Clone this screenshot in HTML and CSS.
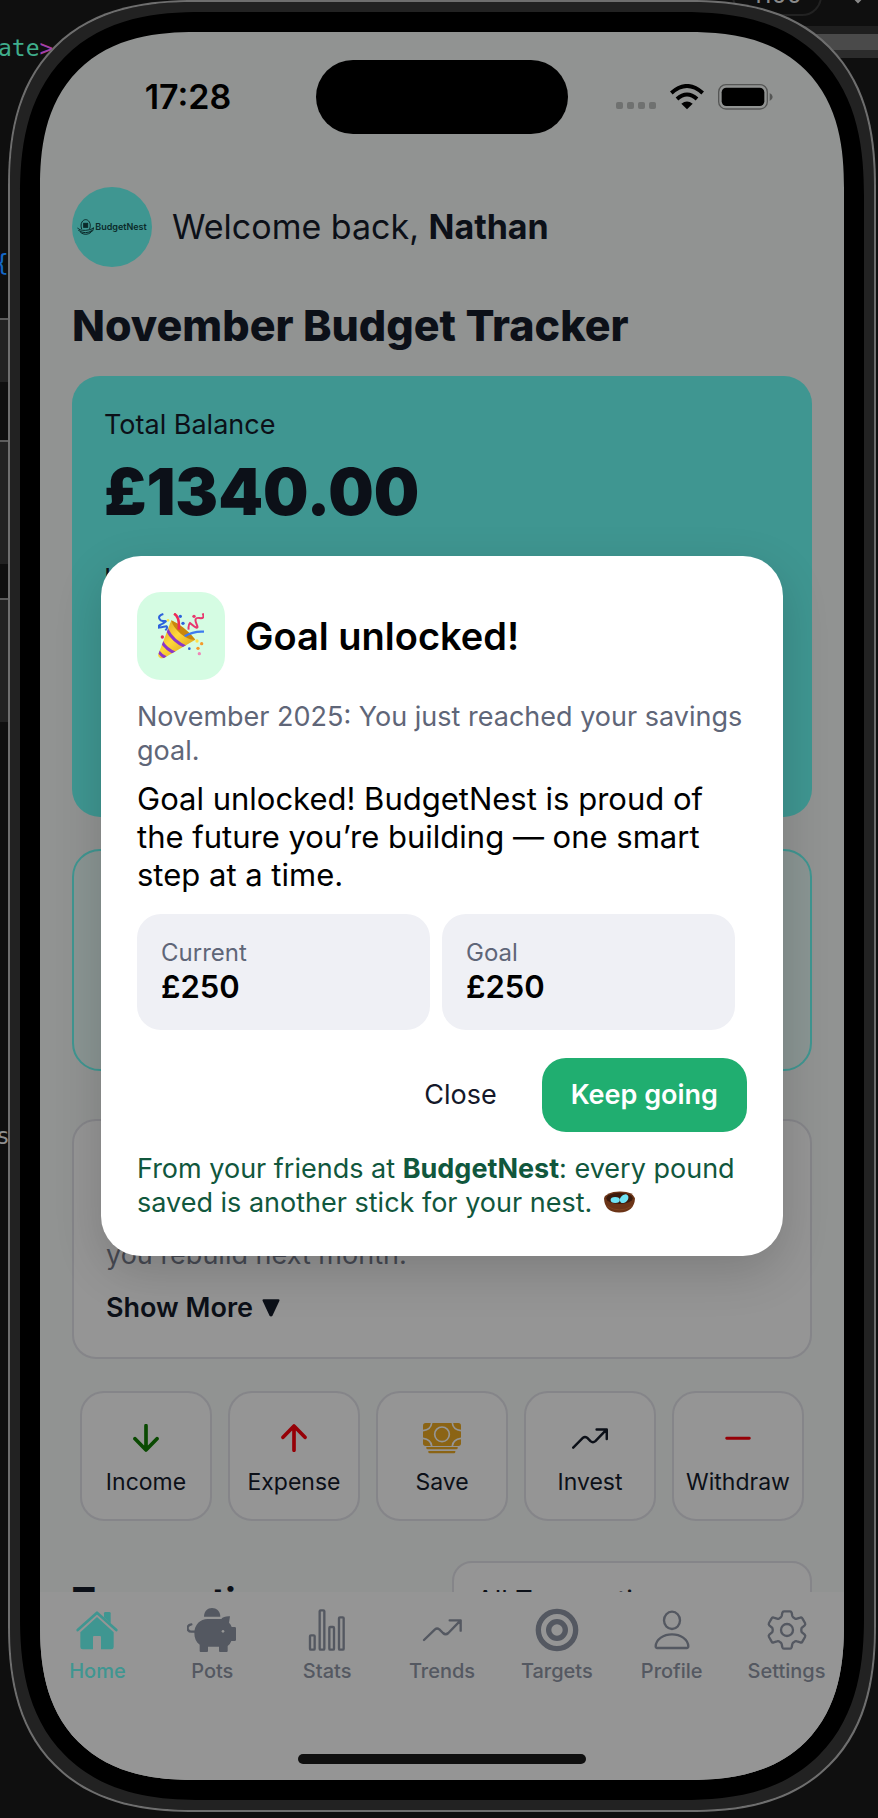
FILE: index.html
```html
<!DOCTYPE html>
<html lang="en">
<head>
    <meta charset="UTF-8">
    <meta name="viewport" content="width=device-width, initial-scale=1.0">
    <title>BudgetNest</title>
    <link rel="stylesheet" href="styles.css">
</head>
<body>

    <!-- editor window behind the phone -->
    <div class="desktop">
        <span class="code code-type">ate<span class="code-bracket">&gt;</span></span>
        <span class="code code-brace">{</span>
        <span class="code code-word">s</span>
        <div class="panel panel-1"></div>
        <div class="panel panel-2"></div>
        <div class="panel panel-3"></div>
        <div class="zoom-pill">1100</div>
        <svg class="zoom-arrow" width="12" height="8" viewBox="0 0 12 8"><path d="M1 1l5 5 5-5" fill="none" stroke="#8a8a8a" stroke-width="2"/></svg>
        <div class="toolbar"></div>
    </div>

    <div class="phone">
        <div class="bezel">
            <div class="screen">

                <div class="status-bar">
                    <div class="time">17:28</div>
                    <div class="island"></div>
                    <div class="indicators">
                        <svg width="40" height="26" viewBox="0 0 40 26" fill="#6f7170">
                            <rect x="0" y="18" width="7" height="7" rx="2"/>
                            <rect x="11" y="18" width="7" height="7" rx="2"/>
                            <rect x="22" y="18" width="7" height="7" rx="2"/>
                            <rect x="33" y="18" width="7" height="7" rx="2"/>
                        </svg>
                        <svg width="34" height="26" viewBox="0 0 102 78" fill="none" stroke="#000" stroke-width="12">
                            <path d="M4 27Q51-15 98 27"/>
                            <path d="M21 45Q51 18 81 45"/>
                            <path d="M51 76L34 59Q51 46 68 59Z" fill="#000" stroke="none"/>
                        </svg>
                        <svg width="55" height="26" viewBox="0 0 165 78">
                            <rect x="2" y="2" width="146" height="73" rx="22" fill="none" stroke="#555655" stroke-width="4"/>
                            <rect x="11" y="11" width="128" height="55" rx="14" fill="#000"/>
                            <path d="M155 27q9 4 9 12t-9 12z" fill="#555655"/>
                        </svg>
                    </div>
                </div>

                <main class="content">
                    <header class="welcome">
                        <div class="avatar">
                            <svg width="17" height="16" viewBox="0 0 51 48" fill="none" stroke="#0b2a2a" stroke-width="3">
                                <path d="M14 30C8 12 18 2 26 2s18 10 12 28"/>
                                <rect x="20" y="13" width="12" height="12" fill="#0b2a2a"/>
                                <path d="M1 26q6 9 25 8t24-8q0 12-12 15"/>
                                <path d="M4 34q22 14 42 0M10 40q16 12 32 0"/>
                            </svg>
                            <span>BudgetNest</span>
                        </div>
                        <p>Welcome back, <strong>Nathan</strong></p>
                    </header>

                    <h1>November Budget Tracker</h1>

                    <section class="balance">
                        <p class="balance-label">Total Balance</p>
                        <p class="balance-amount">£1340.00</p>
                        <p class="balance-label">Income</p>
                    </section>

                    <section class="accent-card"></section>

                    <section class="tip-card">
                        <p>you rebuild next month.</p>
                        <button type="button" class="show-more">Show More
                            <svg width="18" height="18" viewBox="0 0 54 54"><path d="M5 1H49Q54 1 52 6L32 49Q27 56 22 49L2 6Q0 1 5 1Z" fill="#0c1018"/></svg>
                        </button>
                    </section>

                    <div class="actions">
                        <button type="button" class="action">
                            <svg width="26" height="28" viewBox="0 0 78 84" fill="none" stroke="#0a4a02" stroke-width="11" stroke-linecap="round" stroke-linejoin="round"><path d="M39 5V78M6 44L39 78L72 44"/></svg>
                            Income
                        </button>
                        <button type="button" class="action">
                            <svg width="26" height="28" viewBox="0 0 78 84" fill="none" stroke="#960007" stroke-width="11" stroke-linecap="round" stroke-linejoin="round"><path d="M39 79V6M6 40L39 6L72 40"/></svg>
                            Expense
                        </button>
                        <button type="button" class="action">
                            <svg width="38" height="31" viewBox="0 0 114 93">
                                <rect width="114" height="69" rx="8" fill="#8b6415"/>
                                <g fill="none" stroke="#959595" stroke-width="5">
                                    <circle cx="57" cy="34" r="22"/>
                                    <path d="M26 0Q24 20 0 23M88 0Q90 20 114 23M0 46Q24 49 26 69M114 46Q90 49 88 69"/>
                                </g>
                                <path d="M10 72H104V75Q104 79 100 79H14Q10 79 10 75ZM16 84H97V87Q97 91 93 91H20Q16 91 16 87Z" fill="#8b6415"/>
                            </svg>
                            Save
                        </button>
                        <button type="button" class="action">
                            <svg width="36" height="21" viewBox="18 33 117 67" fill="none" stroke="#0c1018" stroke-width="8" stroke-linecap="round" stroke-linejoin="round"><path d="M22 96L54 64Q60 59 67 64L78 75Q86 82 94 75L130 38M98 37H131V68"/></svg>
                            Invest
                        </button>
                        <button type="button" class="action">
                            <svg width="26" height="4" viewBox="0 0 78 12"><rect x="1" y="2" width="76" height="9" rx="4" fill="#960007"/></svg>
                            Withdraw
                        </button>
                    </div>

                    <div class="transactions">
                        <h2>Transactions</h2>
                        <select aria-label="Filter transactions">
                            <option>All Transactions</option>
                        </select>
                    </div>
                </main>

                <nav class="tabs">
                    <a href="#" class="tab active">
                        <svg width="50" height="44" viewBox="0 0 150 132" fill="currentColor">
                            <path d="M17 66L75 14L133 66" fill="none" stroke="currentColor" stroke-width="8" stroke-linecap="round" stroke-linejoin="round"/>
                            <path d="M96 28V16Q96 12 100 12H112Q116 12 116 16V46Z"/>
                            <path d="M75 27L125 73V117Q125 124 118 124H87V87Q87 84 84 84H66Q63 84 63 87V124H32Q25 124 25 117V73Z"/>
                        </svg>
                        Home
                    </a>
                    <a href="#" class="tab">
                        <svg width="50" height="44" viewBox="0 0 150 132" fill="currentColor">
                            <path d="M51 26C51 10 62 0 75 0S100 10 100 26Z"/>
                            <path d="M62 33H103C107 27 118 24 129 25L126 44Q132 49 134 57H143Q147 57 147 61V95Q147 99 143 99H133Q130 108 122 114V129Q122 132 119 132H99Q96 132 96 129V116H63V129Q63 132 60 132H41Q38 132 38 129V110C27 102 22 90 22 75C22 50 40 33 62 33Z"/>
                            <path d="M24 71H13C4 71 1 64 2 58Q4 50 13 49" fill="none" stroke="currentColor" stroke-width="7" stroke-linecap="round"/>
                            <circle cx="108" cy="70" r="4" fill="#959595"/>
                        </svg>
                        Pots
                    </a>
                    <a href="#" class="tab">
                        <svg width="50" height="44" viewBox="0 0 150 132" fill="none" stroke="currentColor" stroke-width="7">
                            <rect x="24" y="82" width="14" height="43" rx="3"/>
                            <rect x="53" y="7" width="14" height="118" rx="3"/>
                            <rect x="82" y="57" width="14" height="68" rx="3"/>
                            <rect x="111" y="28" width="14" height="97" rx="3"/>
                        </svg>
                        Stats
                    </a>
                    <a href="#" class="tab">
                        <svg width="50" height="44" viewBox="0 0 150 132" fill="none" stroke="currentColor" stroke-width="7" stroke-linecap="round" stroke-linejoin="round"><path d="M21 96L54 64Q60 59 67 64L78 75Q86 82 94 75L130 38M98 37H131V68"/></svg>
                        Trends
                    </a>
                    <a href="#" class="tab">
                        <svg width="50" height="44" viewBox="0 0 150 132" fill="none" stroke="currentColor" stroke-width="16">
                            <circle cx="75" cy="66" r="56"/>
                            <circle cx="75" cy="66" r="25"/>
                        </svg>
                        Targets
                    </a>
                    <a href="#" class="tab">
                        <svg width="50" height="44" viewBox="0 0 150 132" fill="none" stroke="currentColor" stroke-width="7">
                            <ellipse cx="75" cy="37" rx="24" ry="26"/>
                            <path d="M26 115C27 93 50 79 75 79S123 93 124 115Q124 120 119 120H31Q26 120 26 115Z"/>
                        </svg>
                        Profile
                    </a>
                    <a href="#" class="tab">
                        <svg width="50" height="44" viewBox="0 0 150 132" fill="none" stroke="currentColor" stroke-width="7" stroke-linejoin="round">
                            <path d="M66 10H84Q88 10 89 14L91 24Q92 27 95 29L99 32Q102 33 105 32L115 29Q119 27 121 31L129 45Q131 49 128 52L121 58Q118 60 118 64V68Q118 72 121 74L128 80Q131 83 129 87L121 101Q119 105 115 103L105 100Q102 99 99 100L95 103Q92 105 91 108L89 118Q88 122 84 122H66Q62 122 61 118L59 108Q58 105 55 103L51 100Q48 99 45 100L35 103Q31 105 29 101L21 87Q19 83 22 80L29 74Q32 72 32 68V64Q32 60 29 58L22 52Q19 49 21 45L29 31Q31 27 35 29L45 32Q48 33 51 32L55 29Q58 27 59 24L61 14Q62 10 66 10Z"/>
                            <circle cx="75" cy="66" r="18"/>
                        </svg>
                        Settings
                    </a>
                </nav>
                <div class="home-indicator"></div>

                <div class="overlay">
                    <div class="modal" role="dialog" aria-labelledby="goalTitle">
                        <div class="modal-head">
                            <div class="modal-icon">
                                <svg width="46" height="46" viewBox="0 0 138 138">
                                    <defs>
                                        <linearGradient id="cone" x1="0" y1="0" x2="1" y2="1">
                                            <stop offset="0" stop-color="#c98a12"/>
                                            <stop offset=".45" stop-color="#ffd93b"/>
                                            <stop offset="1" stop-color="#c07c08"/>
                                        </linearGradient>
                                        <clipPath id="coneClip"><path d="M40 22Q82 42 112 80L18 135Q4 140 0 126Z"/></clipPath>
                                    </defs>
                                    <g clip-path="url(#coneClip)">
                                        <rect width="138" height="138" fill="url(#cone)"/>
                                        <path d="M26 48Q44 85 86 103M10 84Q24 110 54 121M0 114Q10 128 24 134" fill="none" stroke="#8a36c9" stroke-width="9"/>
                                    </g>
                                    <path d="M40 22Q82 42 112 80Q92 82 68 62T40 22Z" fill="#c8860d"/>
                                    <path d="M48 2Q66 12 62 50" fill="none" stroke="#ee2b58" stroke-width="8"/>
                                    <path d="M80 70Q105 54 138 56" fill="none" stroke="#3d7bf0" stroke-width="7"/>
                                    <path d="M16 3Q0 8 4 17T20 24T6 36T26 40Q30 44 22 52" fill="none" stroke="#2e62dc" stroke-width="6"/>
                                    <path d="M134 1Q142 18 124 15T116 34T96 30Q90 36 92 50" fill="none" stroke="#e8386f" stroke-width="6"/>
                                    <circle cx="67" cy="10" r="5" fill="#2e62dc"/>
                                    <circle cx="75" cy="31" r="5" fill="#2e62dc"/>
                                    <circle cx="108" cy="10" r="5" fill="#e8386f"/>
                                    <circle cx="13" cy="72" r="5" fill="#e0245e"/>
                                    <circle cx="30" cy="22" r="4" fill="#ffe14a"/>
                                    <circle cx="117" cy="84" r="5" fill="#ffe14a"/>
                                    <circle cx="131" cy="92" r="5" fill="#f59a2b"/>
                                    <circle cx="120" cy="106" r="5" fill="#f59a2b"/>
                                    <circle cx="94" cy="107" r="4" fill="#2e62dc"/>
                                    <circle cx="124" cy="122" r="5" fill="#ef85b8"/>
                                </svg>
                            </div>
                            <h2 id="goalTitle">Goal unlocked!</h2>
                        </div>
                        <p class="modal-sub">November 2025: You just reached your savings goal.</p>
                        <p class="modal-text">Goal unlocked! BudgetNest is proud of the future you’re building — one smart step at a time.</p>
                        <div class="stats">
                            <div class="stat">
                                <p>Current</p>
                                <strong>£250</strong>
                            </div>
                            <div class="stat">
                                <p>Goal</p>
                                <strong>£250</strong>
                            </div>
                        </div>
                        <div class="modal-buttons">
                            <button type="button" class="close">Close</button>
                            <button type="button" class="keep">Keep going</button>
                        </div>
                        <p class="modal-foot">From your friends at <strong>BudgetNest</strong>: every pound saved is another stick for your nest.
                            <svg width="31" height="22" viewBox="0 0 94 66">
                                <path d="M0 22Q6 2 47 1T94 22Q92 64 47 65T0 22Z" fill="#6b3417"/>
                                <ellipse cx="47" cy="22" rx="40" ry="17" fill="#3b1a0c"/>
                                <ellipse cx="34" cy="27" rx="14" ry="9" fill="#6fe3f5"/>
                                <ellipse cx="61" cy="23" rx="15" ry="11" fill="#6fe3f5" transform="rotate(-45 61 23)"/>
                                <path d="M10 46Q28 57 47 57T84 46" fill="none" stroke="#7d421e" stroke-width="3"/>
                            </svg>
                        </p>
                    </div>
                </div>

            </div>
        </div>
    </div>

</body>
</html>
```

FILE: styles.css
```css
* {
    box-sizing: border-box;
}

body {
    margin: 0;
    font-family: Inter, "Liberation Sans", sans-serif;
    background-color: #0f0f0f;
    color: #0c1018;
    overflow: hidden;
}

h1, h2, p {
    margin: 0;
}

button {
    font-family: inherit;
    cursor: pointer;
}

svg {
    display: block;
    flex-shrink: 0;
}

/* desktop */
.desktop {
    position: absolute;
    inset: 0;
    overflow: hidden;
}

.code {
    position: absolute;
    left: 0;
    font-family: "DejaVu Sans Mono", monospace;
    font-size: 23px;
    line-height: 30px;
}

.code-type {
    top: 33px;
    left: -2px;
    color: #3fae8c;
}

.code-bracket {
    color: #a33fa8;
}

.code-brace {
    top: 248px;
    left: -5px;
    color: #1468c8;
}

.code-word {
    top: 1121px;
    left: -4px;
    color: #8f8f8f;
}

.panel {
    position: absolute;
    left: -10px;
    width: 30px;
    height: 124px;
    background-color: #222;
    border-top: 2px solid #5c5c5c;
}

.panel-1 {
    top: 318px;
    height: 64px;
}

.panel-2 {
    top: 440px;
}

.panel-3 {
    top: 598px;
}

.zoom-pill {
    position: absolute;
    top: -24px;
    right: 56px;
    width: 90px;
    height: 40px;
    padding-top: 4px;
    border: 2px solid #222;
    border-radius: 20px;
    color: #8a8a8a;
    font-size: 24px;
    line-height: 26px;
    text-align: center;
}

.zoom-arrow {
    position: absolute;
    top: -4px;
    right: 14px;
}

.toolbar {
    position: absolute;
    top: 26px;
    right: 0;
    width: 100px;
    height: 32px;
    background-color: #4a4a4a;
    border-top: 8px solid #1f1f1f;
    border-bottom: 8px solid #2c2c2c;
}

/* phone */
.phone {
    position: relative;
    height: 100vh;
    padding: 0 2px 6px 8px;
}

.bezel {
    height: 100%;
    padding: 30px;
    background-color: #000;
    border: 2px solid #6e6e6e;
    border-radius: 156px;
    box-shadow: inset 0 0 0 10px #222;
}

.screen {
    position: relative;
    display: flex;
    flex-direction: column;
    height: 100%;
    background-color: #919392;
    border-radius: 124px;
    overflow: hidden;
}

@supports (corner-shape: superellipse(1.3)) {
    .bezel {
        border-radius: 188px;
        corner-shape: superellipse(1.3);
    }

    .screen {
        border-radius: 156px;
        corner-shape: superellipse(1.3);
    }
}

.status-bar {
    display: grid;
    grid-template-columns: 1fr 252px 1fr;
    align-items: center;
    padding-top: 28px;
}

.time {
    padding-left: 20px;
    color: #000;
    font-size: 34px;
    font-weight: 600;
    line-height: 40px;
    text-align: center;
}

.island {
    height: 74px;
    background-color: #000;
    border-radius: 37px;
}

.indicators {
    display: flex;
    gap: 14px;
    padding-left: 48px;
}

.content {
    flex: 1;
    min-height: 0;
    padding: 53px 32px 0;
    overflow: hidden;
}

.welcome {
    display: flex;
    align-items: center;
    gap: 20px;
    margin-bottom: 32px;
    font-size: 34px;
    line-height: 44px;
}

.avatar {
    display: flex;
    align-items: center;
    justify-content: center;
    gap: 1px;
    width: 80px;
    height: 80px;
    background-color: #3f9691;
    border-radius: 50%;
    color: #0b2a2a;
    font-size: 9px;
    font-weight: 600;
    line-height: 12px;
}

h1 {
    margin-bottom: 25px;
    font-size: 43px;
    font-weight: 800;
    line-height: 52px;
}

.balance {
    min-height: 441px;
    padding: 32px;
    background-color: #3f9691;
    border-radius: 28px;
}

.balance-label {
    font-size: 27px;
    line-height: 34px;
}

.balance-amount {
    margin: 12px 0 32px;
    font-size: 64px;
    font-weight: 900;
    line-height: 76px;
}

.accent-card {
    min-height: 222px;
    margin-top: 32px;
    background-color: #8a9593;
    border: 2px solid #3f9691;
    border-radius: 28px;
}

.tip-card {
    display: flex;
    flex-direction: column;
    align-items: flex-start;
    justify-content: flex-end;
    gap: 19px;
    min-height: 240px;
    margin-top: 48px;
    padding: 32px;
    background-color: #959595;
    border: 2px solid #858589;
    border-radius: 24px;
    color: #464952;
    font-size: 27px;
    line-height: 34px;
}

.show-more {
    display: flex;
    align-items: center;
    gap: 9px;
    padding: 0;
    background: none;
    border: none;
    color: #0c1018;
    font-size: 27px;
    font-weight: 600;
    line-height: 34px;
}

.actions {
    display: grid;
    grid-template-columns: repeat(5, 1fr);
    gap: 16px;
    margin-top: 32px;
    padding: 0 8px;
}

.action {
    display: grid;
    grid-template-rows: 32px 30px;
    align-items: center;
    justify-items: center;
    align-content: center;
    gap: 13px;
    height: 130px;
    padding: 7px 0 0;
    background-color: #959595;
    border: 2px solid #858589;
    border-radius: 24px;
    color: #0c1018;
    font-size: 23px;
    line-height: 30px;
}

.transactions {
    display: grid;
    grid-template-columns: 1fr 360px;
    margin-top: 40px;
}

.transactions h2 {
    padding-top: 17px;
    font-size: 35px;
    font-weight: 800;
    line-height: 44px;
}

.transactions select {
    appearance: none;
    height: 78px;
    padding: 0 22px;
    background-color: #959595;
    border: 2px solid #858589;
    border-radius: 20px;
    color: #0c1018;
    font-family: inherit;
    font-size: 27px;
}

.tabs {
    display: grid;
    grid-template-columns: repeat(7, 1fr);
    padding-top: 16px;
    height: 162px;
    background-color: #959595;
}

.tab {
    display: flex;
    flex-direction: column;
    align-items: center;
    gap: 7px;
    color: #545861;
    font-size: 20px;
    font-weight: 500;
    line-height: 24px;
    text-decoration: none;
}

.tab.active {
    color: #3f9691;
}

.home-indicator {
    height: 26px;
    background-color: #959595;
}

.home-indicator::before {
    content: "";
    display: block;
    width: 288px;
    height: 10px;
    margin: 0 auto;
    background-color: #0f0f0f;
    border-radius: 5px;
}

/* goal modal */
.overlay {
    position: absolute;
    inset: 0;
    display: flex;
    align-items: center;
    padding: 0 61px;
}

.modal {
    width: 100%;
    padding: 36px;
    background-color: #fff;
    border-radius: 40px;
    box-shadow: 0 16px 48px rgba(0, 0, 0, 0.16);
    color: #000;
}

.modal-head {
    display: flex;
    align-items: center;
    gap: 20px;
    margin-bottom: 20px;
}

.modal-icon {
    display: flex;
    align-items: center;
    justify-content: center;
    width: 88px;
    height: 88px;
    background-color: #d5fce3;
    border-radius: 24px;
}

.modal-head h2 {
    font-size: 38px;
    font-weight: 600;
    line-height: 48px;
}

.modal-sub {
    margin-bottom: 12px;
    color: #5f6678;
    font-size: 27px;
    line-height: 34px;
}

.modal-text {
    margin-bottom: 20px;
    font-size: 31px;
    line-height: 38px;
}

.stats {
    display: flex;
    margin-bottom: 28px;
}

.stat {
    flex: 1;
    margin-right: 12px;
    padding: 24px;
    background-color: #eff0f5;
    border-radius: 24px;
}

.stat p {
    color: #5f6678;
    font-size: 24px;
    line-height: 30px;
}

.stat strong {
    display: block;
    font-size: 31px;
    font-weight: 600;
    line-height: 38px;
}

.modal-buttons {
    display: flex;
    justify-content: flex-end;
    gap: 16px;
    margin-bottom: 20px;
}

.modal-buttons button {
    height: 74px;
    padding: 0 29px;
    border: none;
    border-radius: 24px;
    font-size: 27px;
    line-height: 34px;
}

.close {
    background: none;
    color: #14182a;
}

.modal-buttons .keep {
    background-color: #20ae70;
    color: #fff;
    font-weight: 600;
}

.modal-foot {
    color: #11573d;
    font-size: 27px;
    line-height: 34px;
}

.modal-foot svg {
    display: inline;
    margin-left: 4px;
    vertical-align: -1px;
}
```
